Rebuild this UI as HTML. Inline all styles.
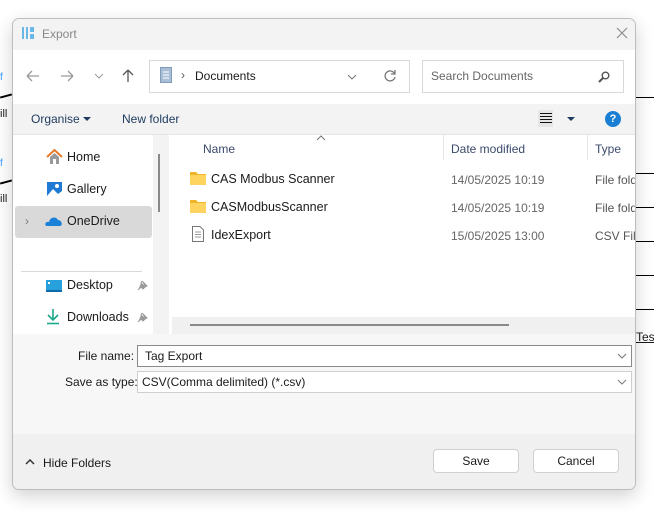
<!DOCTYPE html>
<html><head><style>
*{box-sizing:border-box;margin:0;padding:0}
body{width:654px;height:515px;background:#fff;position:relative;overflow:hidden;font-family:"Liberation Sans",sans-serif;font-size:12px;color:#1a1a1a}
.a{position:absolute;white-space:nowrap}
.ln{position:absolute;background:#000}
</style></head><body>
<div class="ln" style="left:0;top:95px;width:12px;height:2px;transform:rotate(-15deg)"></div>
<div class="ln" style="left:0;top:181px;width:12px;height:2px;transform:rotate(-15deg)"></div>
<div class="a" style="left:0;top:108px;font-size:11px">ill</div>
<div class="a" style="left:0;top:193px;font-size:11px">ill</div>
<div class="a" style="left:0;top:72px;font-size:10px;color:#39f">f</div>
<div class="a" style="left:0;top:158px;font-size:10px;color:#39f">f</div>
<div class="ln" style="left:636px;top:97px;width:18px;height:1px"></div>
<div class="ln" style="left:636px;top:173px;width:18px;height:1px"></div>
<div class="ln" style="left:636px;top:207px;width:18px;height:1px"></div>
<div class="ln" style="left:636px;top:241px;width:18px;height:1px"></div>
<div class="ln" style="left:636px;top:275px;width:18px;height:1px"></div>
<div class="ln" style="left:636px;top:309px;width:18px;height:1px"></div>
<div class="a" style="left:636px;top:330px;font-size:12px;text-decoration:underline">Tes</div>

<div class="a" style="left:12px;top:18px;width:624px;height:472px;border:1px solid #bdbdbd;border-radius:7px;overflow:hidden;background:#fff;box-shadow:0 6px 18px rgba(0,0,0,.18)">
 <div class="a" style="left:0;top:0;width:624px;height:31px;background:#f3f3f3"></div>
 <svg class="a" style="left:8px;top:7px" width="14" height="14"><g fill="#6ab8e8"><rect x="1" y="1" width="2" height="12"/><rect x="5" y="1" width="2" height="12"/><rect x="9" y="1" width="4" height="5"/><rect x="9" y="8" width="4" height="5"/></g></svg>
 <div class="a" style="left:29px;top:8px;color:#888;font-size:12px">Export</div>
 <svg class="a" style="left:603px;top:8px" width="12" height="12"><path d="M1 1L11 11M11 1L1 11" stroke="#888" stroke-width="1.1"/></svg>
 <svg class="a" style="left:12px;top:49px" width="120" height="16" fill="none" stroke="#9a9a9a" stroke-width="1.3"><path d="M2 8H14M2 8L7 3M2 8L7 13"/><path d="M36 8H48M48 8L43 3M48 8L43 13"/><path d="M70 6L74 10L78 6" stroke-width="1"/><path d="M103 14V2M103 2L98 7M103 2L108 7" stroke="#555"/></svg>
 <div class="a" style="left:136px;top:41px;width:261px;height:33px;border:1px solid #d9d9d9;background:#fff"></div>
 <svg class="a" style="left:147px;top:48px" width="12" height="16"><rect x=".5" y=".5" width="11" height="15" fill="#a9bfd8" stroke="#7f9bb9"/><g stroke="#fff"><path d="M3 5H9M3 8H9M3 11H9"/></g></svg>
 <div class="a" style="left:168px;top:49px;color:#555">›</div>
 <div class="a" style="left:182px;top:50px">Documents</div>
 <svg class="a" style="left:334px;top:54px" width="10" height="8"><path d="M1 2L5 6L9 2" stroke="#777" fill="none"/></svg>
 <svg class="a" style="left:370px;top:50px" width="14" height="14"><path d="M11.5 4.5A5 5 0 1 0 12 8" stroke="#777" fill="none" stroke-width="1.3"/><path d="M12 1V5H8" stroke="#777" fill="none" stroke-width="1.3"/></svg>
 <div class="a" style="left:409px;top:41px;width:202px;height:33px;border:1px solid #d9d9d9;background:#fff"></div>
 <div class="a" style="left:418px;top:50px;color:#666">Search Documents</div>
 <svg class="a" style="left:585px;top:52px" width="12" height="12"><circle cx="7.5" cy="4.5" r="3.3" stroke="#555" fill="none" stroke-width="1.4"/><path d="M5 7L1 11" stroke="#555" stroke-width="2"/></svg>
 <div class="a" style="left:0;top:85px;width:624px;height:31px;background:#f3f3f3;border-bottom:1px solid #e5e5e5"></div>
 <div class="a" style="left:18px;top:93px;color:#1e3a5f">Organise</div>
 <svg class="a" style="left:70px;top:98px" width="8" height="5"><path d="M0 0H8L4 4Z" fill="#1e3a5f"/></svg>
 <div class="a" style="left:109px;top:93px;color:#1e3a5f">New folder</div>
 <div class="a" style="left:525px;top:91px;width:15px;height:17px;background:#e6e6e6"></div>
 <svg class="a" style="left:527px;top:94px" width="12" height="10"><path d="M0 .5H12M0 3.5H12M0 6.5H12M0 9.5H12" stroke="#111"/></svg>
 <svg class="a" style="left:554px;top:98px" width="8" height="5"><path d="M0 0H8L4 4Z" fill="#1e3a5f"/></svg>
 <div class="a" style="left:592px;top:92px;width:16px;height:16px;border-radius:50%;background:#1a7fd4;color:#fff;font-size:11px;font-weight:bold;text-align:center;line-height:16px">?</div>
 <div class="a" style="left:140px;top:116px;width:16px;height:199px;background:#f3f3f3"></div>
 <div class="a" style="left:145px;top:135px;width:2px;height:58px;background:#8a8a8a"></div>
 <div class="a" style="left:2px;top:187px;width:137px;height:32px;background:#d9d9d9;border-radius:3px"></div>
 <svg class="a" style="left:33px;top:130px" width="17" height="16"><path d="M1 8L8.5 1L16 8" stroke="#e87a2a" stroke-width="2" fill="none"/><path d="M4 8V15H13V8L8.5 4Z" fill="#9a9a9a"/><rect x="7" y="10" width="3" height="5" fill="#fff"/></svg>
 <div class="a" style="left:54px;top:131px;font-size:12.5px">Home</div>
 <svg class="a" style="left:33px;top:162px" width="17" height="16"><rect x="1" y="1" width="15" height="14" fill="#1e7ad4"/><path d="M1 15L7 8L12 13L16 10V15Z" fill="#fff"/><circle cx="11" cy="5" r="2" fill="#fff"/></svg>
 <div class="a" style="left:54px;top:163px;font-size:12.5px">Gallery</div>
 <div class="a" style="left:12px;top:195px;color:#777">›</div>
 <svg class="a" style="left:32px;top:196px" width="18" height="12"><path d="M2 11C-1 11 0 6 4 7C5 2 11 1 13 5C17 5 18 11 15 11Z" fill="#1a80d8"/></svg>
 <div class="a" style="left:54px;top:195px;font-size:12.5px">OneDrive</div>
 <div class="a" style="left:8px;top:252px;width:121px;height:1px;background:#d9d9d9"></div>
 <svg class="a" style="left:32px;top:260px" width="18" height="14"><rect x="1" y="1" width="16" height="12" fill="#27a0dc"/><rect x="1" y="11" width="16" height="2" fill="#0f6aa8"/><rect x="3" y="3" width="2" height="2" fill="#fff"/></svg>
 <div class="a" style="left:54px;top:259px;font-size:12.5px">Desktop</div>
 <svg class="a" style="left:33px;top:289px" width="14" height="17"><path d="M7 1V12M2 7L7 12L12 7" stroke="#1aa88a" stroke-width="1.6" fill="none"/><path d="M1 15.5H13" stroke="#1aa88a" stroke-width="1.6"/></svg>
 <div class="a" style="left:54px;top:291px;font-size:12.5px">Downloads</div>
 <svg class="a" style="left:124px;top:261px" width="11" height="11"><path d="M5 1L10 6L8 7L6 9L4 7L1 10M5 1L4 3L8 7" fill="#999" stroke="#999"/></svg>
 <svg class="a" style="left:124px;top:293px" width="11" height="11"><path d="M5 1L10 6L8 7L6 9L4 7L1 10M5 1L4 3L8 7" fill="#999" stroke="#999"/></svg>
 <svg class="a" style="left:303px;top:116px" width="10" height="6"><path d="M1 5L5 1L9 5" stroke="#777" fill="none"/></svg>
 <div class="a" style="left:190px;top:123px;color:#3b4a6b">Name</div>
 <div class="a" style="left:430px;top:116px;width:1px;height:25px;background:#e5e5e5"></div>
 <div class="a" style="left:438px;top:123px;color:#3b4a6b">Date modified</div>
 <div class="a" style="left:574px;top:116px;width:1px;height:25px;background:#e5e5e5"></div>
 <div class="a" style="left:582px;top:123px;color:#3b4a6b">Type</div>
 <svg class="a" style="left:177px;top:152px" width="16" height="14"><path d="M0 1H6L8 3H16V14H0Z" fill="#f0b429"/><rect y="4" width="16" height="10" fill="#ffd45e"/></svg>
 <div class="a" style="left:198px;top:153px;font-size:12.5px">CAS Modbus Scanner</div>
 <div class="a" style="left:438px;top:154px;color:#666">14/05/2025 10:19</div>
 <div class="a" style="left:582px;top:154px;color:#555">File folder</div>
 <svg class="a" style="left:177px;top:180px" width="16" height="14"><path d="M0 1H6L8 3H16V14H0Z" fill="#f0b429"/><rect y="4" width="16" height="10" fill="#ffd45e"/></svg>
 <div class="a" style="left:198px;top:181px;font-size:12.5px">CASModbusScanner</div>
 <div class="a" style="left:438px;top:182px;color:#666">14/05/2025 10:19</div>
 <div class="a" style="left:582px;top:182px;color:#555">File folder</div>
 <svg class="a" style="left:179px;top:207px" width="12" height="16"><path d="M.5 .5H8L11.5 4V15.5H.5Z" fill="#fff" stroke="#777"/><path d="M3 6H9M3 8.5H9M3 11H9" stroke="#999"/></svg>
 <div class="a" style="left:198px;top:209px;font-size:12.5px">IdexExport</div>
 <div class="a" style="left:438px;top:210px;color:#666">15/05/2025 13:00</div>
 <div class="a" style="left:582px;top:210px;color:#555">CSV File</div>
 <div class="a" style="left:159px;top:298px;width:465px;height:17px;background:#f0f0f0"></div>
 <div class="a" style="left:177px;top:305px;width:319px;height:2px;background:#8a8a8a"></div>
 <div class="a" style="left:0;top:315px;width:624px;height:100px;background:#f7f7f7"></div>
 <div class="a" style="left:65px;top:330px">File name:</div>
 <div class="a" style="left:124px;top:326px;width:495px;height:22px;border:1px solid #8a8a8a;background:#fff"></div>
 <div class="a" style="left:132px;top:330px">Tag Export</div>
 <div class="a" style="left:52px;top:356px">Save as type:</div>
 <div class="a" style="left:124px;top:352px;width:495px;height:22px;border:1px solid #cfcfcf;background:#fff"></div>
 <div class="a" style="left:129px;top:356px">CSV(Comma delimited) (*.csv)</div>
 <svg class="a" style="left:604px;top:334px" width="10" height="6"><path d="M1 1L5 5L9 1" stroke="#777" fill="none"/></svg>
 <svg class="a" style="left:604px;top:360px" width="10" height="6"><path d="M1 1L5 5L9 1" stroke="#777" fill="none"/></svg>
 <div class="a" style="left:0;top:415px;width:624px;height:57px;background:#f0f0f0"></div>
 <svg class="a" style="left:12px;top:440px" width="10" height="6"><path d="M1 5L5 1L9 5" stroke="#333" stroke-width="1.5" fill="none"/></svg>
 <div class="a" style="left:30px;top:437px">Hide Folders</div>
 <div class="a" style="left:420px;top:430px;width:86px;height:24px;border:1px solid #d0d0d0;border-radius:4px;background:#fff;text-align:center;line-height:22px">Save</div>
 <div class="a" style="left:520px;top:430px;width:86px;height:24px;border:1px solid #d0d0d0;border-radius:4px;background:#fff;text-align:center;line-height:22px">Cancel</div>
</div>
</body></html>
